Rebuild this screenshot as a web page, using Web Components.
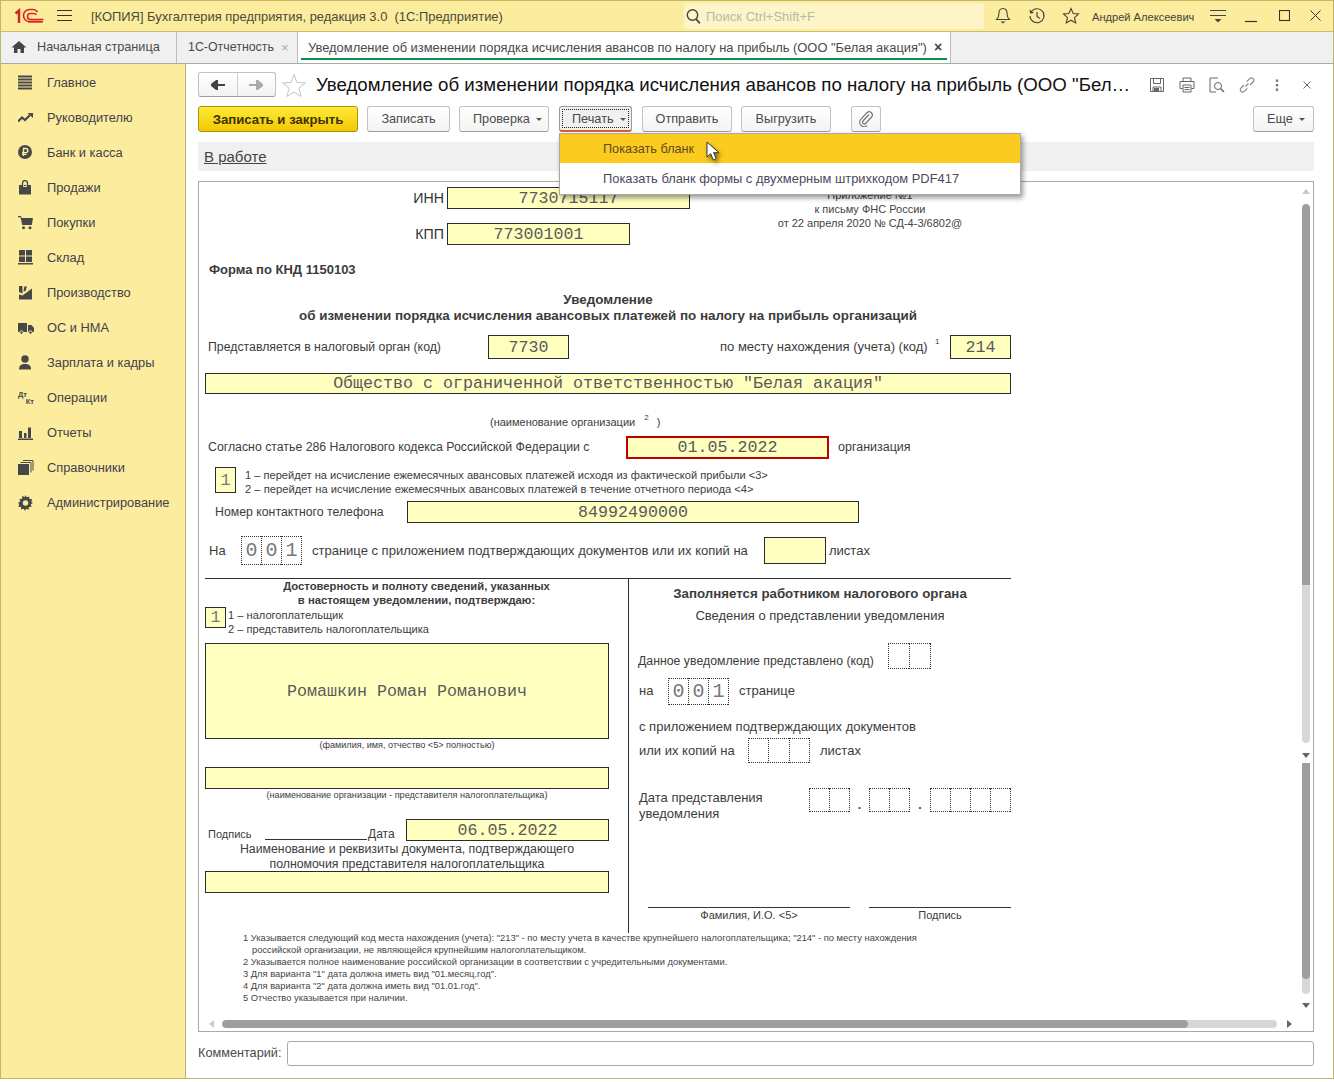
<!DOCTYPE html>
<html lang="ru"><head><meta charset="utf-8"><title>1С</title>
<style>
html,body{margin:0;padding:0;background:#fff}
body{width:1334px;height:1082px;overflow:hidden;font-family:"Liberation Sans",Arial,sans-serif}
</style></head><body>
<app-window></app-window>
<script>
function def(name, css, html){
  customElements.define(name, class extends HTMLElement{
    connectedCallback(){
      if(this.shadowRoot) return;
      const r=this.attachShadow({mode:'open'});
      const h=typeof html==='function'?html(this):html;
      r.innerHTML='<style>'+css+'</style>'+h;
    }
  });
}
const S=(w,h,inner,extra='')=>`<svg width="${w}" height="${h}" viewBox="0 0 ${w} ${h}" style="display:block;${extra}" aria-hidden="true">${inner}</svg>`;

/* ---------- small generic parts ---------- */
def('f-box',`:host{display:flex;align-items:center;justify-content:center;box-sizing:border-box;flex:none;border:1px solid #2b2b2b;background:#ffffc0;color:#5a5a5a;font:16.67px/1 "Liberation Mono",monospace;white-space:pre;padding-top:2px}`,`<slot></slot>`);
def('f-cells',`:host{display:flex;flex:none;box-sizing:border-box;border-right:1px dotted #333}
 i{flex:1;box-sizing:border-box;border:1px dotted #333;border-right:0;display:flex;align-items:center;justify-content:center;font:normal 20px/1 "Liberation Mono",monospace;color:#777}`,
 el=>{const n=+el.getAttribute('n');const v=el.getAttribute('v')||'';let s='';for(let i=0;i<n;i++)s+=`<i>${v[i]||''}</i>`;return s;});

def('tool-btn',`:host{display:flex;align-items:center;justify-content:center;box-sizing:border-box;height:26px;flex:none;border:1px solid #c2c2c2;border-bottom-color:#9d9d9d;border-radius:3px;background:linear-gradient(#fff,#f3f3f3);font:12.7px "Liberation Sans",sans-serif;color:#4a4a4a;white-space:nowrap}
 :host([primary]){background:linear-gradient(#fdec3a,#f4c800);border-color:#a8930f;color:#3d3300;font-weight:bold;font-size:13.2px}
 :host([caret]){justify-content:flex-start;padding-left:13px}
 :host([pressed]){background:#f0f0f0;border-color:#9a9a9a;border-bottom:2px solid #d2622a;padding:2px}
 .in{display:flex;align-items:center;justify-content:center;width:100%;height:100%;box-sizing:border-box}
 :host([caret]) .in{justify-content:flex-start}
 :host([pressed]) .in{border:1px dotted #222;padding-left:9px}
 .c{display:inline-block;width:0;height:0;border:3px solid transparent;border-top:3px solid #555;border-bottom:0;margin-left:6px;margin-top:1px}`,
 el=>`<span class="in"><slot></slot>${el.hasAttribute('caret')?'<span class="c"></span>':''}</span>`);

/* ---------- top bar ---------- */
def('top-bar',`:host{display:flex;align-items:center;box-sizing:border-box;height:31px;background:#fbec9e;border-bottom:1px solid #c9bd70;flex:none;color:#4c4a3c;font:12.93px "Liberation Sans",sans-serif}
 .logo{margin-left:13px}.ham{margin-left:13px}
 .t{margin-left:19px;width:593px;white-space:pre;padding-top:1px}
 .s{width:300px;height:26px;background:#fdf5c8;border-radius:3px;display:flex;align-items:center;box-sizing:border-box;padding-left:2px;color:#bcb89e;font-size:13px}
 .s span{margin-left:5px;padding-top:1px}
 .u{font-size:11.1px;margin-left:12px;width:104px;white-space:nowrap;color:#45433a;padding-top:1px}
 .ic{flex:none}`,
 `<span class="logo">${S(30,16,`<g fill="none" stroke="#d8222a"><path d="M1.5 5.5 5 2.5V15" stroke-width="2.4"/><path d="M28 14.5H16.5a6 6 0 0 1 0-12H20a6 6 0 0 1 4.6 2.4" stroke-width="1.6" transform="translate(-1 -1)"/><path d="M29.5 11.5H16.5a3 3 0 0 1 0-6H20a3 3 0 0 1 2.4 1.2" stroke-width="1.6"/></g><rect x="14" y="13" width="15" height="1.6" fill="#d8222a"/>`)}</span>
 <span class="ham">${S(15,12,`<path d="M0 .5h15M0 5.5h15M0 10.5h15" stroke="#333"/>`)}</span>
 <span class="t">[КОПИЯ] Бухгалтерия предприятия, редакция 3.0  (1С:Предприятие)</span>
 <div class="s">${S(15,17,`<circle cx="6.5" cy="7" r="5.2" fill="none" stroke="#444" stroke-width="1.4"/><path d="M10.2 11l3.6 4.4" stroke="#444" stroke-width="1.8"/>`)}<span>Поиск Ctrl+Shift+F</span></div>
 <span class="ic" style="margin-left:11px">${S(16,18,`<path d="M8 1.500c-2.800 0-4 2-4 4.500 0 3-.8 5-2.400 6.500h12.800C12.800 11 12 9 12 6c0-2.500-1.200-4.500-4-4.500z" fill="none" stroke="#444" stroke-width="1.100"/><path d="M5.500 14.500h5L8 16.500z" fill="#444"/>`)}</span>
 <span class="ic" style="margin-left:17px">${S(18,18,`<path d="M3.200 4.800A7 7 0 1 1 2 9" fill="none" stroke="#444" stroke-width="1.100"/><path d="M1.500 2.500l.6 4 4-.6z" fill="#444"/><path d="M9 5v4.500l3 2" fill="none" stroke="#444" stroke-width="1.200"/>`)}</span>
 <span class="ic" style="margin-left:16px">${S(18,18,`<path d="M9 1.500l2.200 5 5.300.5-4 3.600 1.200 5.400L9 13.200 4.300 16l1.200-5.400-4-3.600 5.300-.5z" fill="none" stroke="#444" stroke-width="1.100"/>`)}</span>
 <span class="u">Андрей Алексеевич</span>
 <span class="ic" style="margin-left:14px">${S(16,14,`<path d="M0 1.500h16M0 6.500h16" stroke="#444"/><path d="M4.500 10h7L8 13.500z" fill="#444"/>`)}</span>
 <span class="ic" style="margin-left:19px">${S(12,14,`<path d="M0 12.500h12" stroke="#333" stroke-width="1.200"/>`)}</span>
 <span class="ic" style="margin-left:22px">${S(11,12,`<rect x=".5" y=".5" width="10" height="10" fill="none" stroke="#333" stroke-width="1.100"/>`)}</span>
 <span class="ic" style="margin-left:20px">${S(11,12,`<path d="M.5 .5l10 10M10.500 .5l-10 10" stroke="#333"/>`)}</span>`);

/* ---------- tabs ---------- */
def('tab-bar',`:host{display:flex;box-sizing:border-box;height:32px;background:#f0f0f0;border-bottom:1px solid #a9a9a9;flex:none;font:12.7px "Liberation Sans",sans-serif;color:#4a4a4a}
 .tab{display:flex;align-items:center;box-sizing:border-box;border-right:1px solid #bdbdbd;flex:none;white-space:nowrap;padding-bottom:1px}
 .a{background:#fff;position:relative;border-right:1px solid #bdbdbd;font-size:12.92px}
 .a::after{content:"";position:absolute;left:3px;right:3px;bottom:3px;height:2px;background:#0c8f4d}`,
 `<div class="tab" style="width:176px;padding-left:10px">${S(16,14,`<path d="M8 1L.5 7.500H3V13h3.500V9h3v4H13V7.500h2.500z" fill="#444"/>`)}<span style="margin-left:10px">Начальная страница</span></div>
 <div class="tab" style="width:121px;padding-left:11px;font-size:12.4px">1С-Отчетность<span style="margin-left:7px;color:#aaa;font-size:13px">×</span></div>
 <div class="tab a" style="width:653px;padding-left:10px">Уведомление об изменении порядка исчисления авансов по налогу на прибыль (ООО "Белая акация")<span style="margin-left:7px;color:#444;font-size:14px;font-weight:bold">×</span></div>`);

/* ---------- side nav ---------- */
const NI={
 main:`<path d="M0 1.500h14M0 4.500h14M0 7.500h14M0 10.500h14M0 13.500h14" stroke="#484848" stroke-width="1.800"/>`,
 boss:`<path d="M0 11.500l4-4 3 2.500 5-5" fill="none" stroke="#484848" stroke-width="2.200"/><path d="M9.500 3H15v5z" fill="#484848"/>`,
 bank:`<circle cx="7" cy="7" r="7" fill="#484848"/><path d="M5.500 11V3.500h2.300a2 2 0 0 1 0 4.200H4M4 9.300h4.500" fill="none" stroke="#fbec9e" stroke-width="1.300"/>`,
 sale:`<path d="M1 5h12v9.500H1z" fill="#484848"/><path d="M4.500 7V3a2.500 2.500 0 0 1 5 0v4" fill="none" stroke="#484848" stroke-width="1.300"/><path d="M5.200 5h3.600V7H5.200z" fill="#fbec9e"/><path d="M6 5h2v1H6z" fill="#484848"/>`,
 buy:`<path d="M0 1h2.800l1 2H15l-1.200 7H4.200L2.500 2.300H0z" fill="#484848"/><circle cx="5.500" cy="12.800" r="1.500" fill="#484848"/><circle cx="12" cy="12.800" r="1.500" fill="#484848"/>`,
 stock:`<path d="M1 0h6v5.500H1zM8 0h6v5.500H8zM1 6.500h6V12H1zM8 6.500h6V12H8zM0 13h15v1.500H0z" fill="#484848"/>`,
 prod:`<path d="M1 7V1h3.500v7.500zM5.500 6.500l.8-5H9L7.500 6zM1 14.500V9.500l3.500 1L14 3.500v11z" fill="#484848"/>`,
 car:`<path d="M0 3h9v9H0zM10 5h3.500L16 8v4H10z" fill="#484848"/><circle cx="3.500" cy="12.500" r="1.700" fill="#484848" stroke="#fbec9e"/><circle cx="12.500" cy="12.500" r="1.700" fill="#484848" stroke="#fbec9e"/>`,
 man:`<circle cx="7" cy="4" r="3.700" fill="#484848"/><path d="M1 14.500c0-4 2-5.500 6-5.500s6 1.500 6 5.500z" fill="#484848"/>`,
 rep:`<path d="M1 6h3v7H1zM6 8h2.500v5H6zM10 2.500h3V13h-3zM0 13.500h15V15H0z" fill="#484848"/>`,
 ref:`<path d="M0 4h11v11H0z" fill="#484848"/><path d="M2.500 2.500h10.500v10M5 .5h10v10" fill="none" stroke="#484848"/>`,
 gear:`<g fill="#484848"><path d="M7.500 0l1.200 2.300 2.600-.9.200 2.700 2.700.2-.9 2.600L15 8l-2.300 1.200.9 2.600-2.700.2-.2 2.700-2.600-.9L7 16l-1.200-2.300-2.600.9-.2-2.700-2.700-.2.9-2.600L0 7.800l2.300-1.200-.9-2.600 2.700-.2.2-2.700 2.600.9z"/></g><circle cx="7.500" cy="8" r="2.700" fill="#fbec9e"/>`
};
def('nav-item',`:host{display:flex;align-items:center;height:35px;flex:none;font:12.85px "Liberation Sans",sans-serif;color:#43414a}
 .i{width:16px;height:16px;margin-left:17px;flex:none;display:flex;align-items:center;justify-content:center}
 .t{margin-left:13px;white-space:nowrap}
 .dk{font:bold 7.500px/7px "Liberation Sans",sans-serif;color:#484848;display:block;width:16px}
 .dk b{display:block}.dk b+b{text-align:right}`,
 el=>{const k=el.getAttribute('i');const ic=k==='op'?`<span class="dk"><b>Дт</b><b>Кт</b></span>`:S(16,16,NI[k]);return `<span class="i">${ic}</span><span class="t"><slot></slot></span>`;});
def('side-nav',`:host{display:flex;flex-direction:column;box-sizing:border-box;width:185px;background:#fbec9e;border-right:1px solid #bdb36a;flex:none;padding-top:1px}`,`<slot></slot>`);

/* ---------- document head ---------- */
def('doc-head',`:host{display:flex;align-items:center;height:25px;flex:none;font:18.67px "Liberation Sans",sans-serif;color:#111}
 .nav{display:flex;width:78px;height:25px;box-sizing:border-box;border:1px solid #c2c2c2;border-bottom-color:#9d9d9d;border-radius:3px;background:linear-gradient(#fff,#f3f3f3);flex:none}
 .nav span{flex:1;display:flex;align-items:center;justify-content:center}
 .nav span+span{border-left:1px solid #cfcfcf}
 .title{margin-left:10px;width:820px;white-space:nowrap;overflow:hidden;text-overflow:ellipsis;flex:none;padding-top:1px}
 .ic{flex:none;display:block}`,
 `<div class="nav"><span>${S(14,10,`<path d="M14 5H5M6 .5L.5 5 6 9.500z" stroke="#444" stroke-width="2" fill="#444"/>`)}</span><span>${S(14,10,`<path d="M0 5h9M8 .5L13.500 5 8 9.500z" stroke="#aaa" stroke-width="2" fill="#aaa"/>`)}</span></div>
 <span style="margin-left:6px;flex:none">${S(24,24,`<path d="M12 1.500l3 8 8.500.4-6.700 5.300 2.300 8.200L12 19l-7.100 4.400 2.300-8.200L.5 9.900 9 9.500z" fill="none" stroke="#c4c4c4" stroke-width="1"/>`)}</span>
 <span class="title">Уведомление об изменении порядка исчисления авансов по налогу на прибыль (ООО "Белая акация")</span>
 <span class="ic" style="margin-left:13px">${S(16,16,`<path d="M1.500 1.500h13v13h-13z" fill="none" stroke="#666"/><path d="M4.500 1.500h7v5h-7zM4 10h8v4.500H4z" fill="none" stroke="#666"/><path d="M5 11h5v3.500H5z" fill="#666"/>`)}</span>
 <span class="ic" style="margin-left:14px">${S(16,16,`<path d="M4 4.500V1h8v3.500M3.500 11.500H1v-7h14v7h-2.500" fill="none" stroke="#666"/><path d="M4 8h8v7H4z" fill="none" stroke="#666"/><path d="M5.500 10.500h5M5.500 12.500h5" stroke="#666"/>`)}</span>
 <span class="ic" style="margin-left:14px">${S(16,16,`<path d="M9 1H1v14h6" fill="none" stroke="#666"/><circle cx="9" cy="9" r="3.500" fill="none" stroke="#666"/><path d="M11.500 11.500l3.500 3.500" stroke="#666" stroke-width="1.500"/>`)}</span>
 <span class="ic" style="margin-left:14px">${S(16,16,`<path d="M6.500 9.500l3-3M5 8L2 11a2.300 2.300 0 0 0 3.300 3.300l3-3M11 8l3-3A2.300 2.300 0 0 0 10.700 1.700l-3 3" fill="none" stroke="#888" stroke-width="1.200"/>`)}</span>
 <span class="ic" style="margin-left:14px">${S(16,16,`<g fill="#777"><rect x="6.800" y="2.500" width="2.400" height="2.400"/><rect x="6.800" y="7" width="2.400" height="2.400"/><rect x="6.800" y="11.500" width="2.400" height="2.400"/></g>`)}</span>
 <span class="ic" style="margin-left:14px">${S(16,16,`<path d="M4.500 4.500l7 7M11.500 4.500l-7 7" stroke="#666"/>`)}</span>`);

def('doc-toolbar',`:host{display:flex;height:26px;margin-top:9px;flex:none}`,`<slot></slot>`);

/* ---------- form ---------- */
def('tax-form',`:host{display:block;font:12.3px "Liberation Sans",sans-serif;color:#3c3c3c;width:1100px;line-height:16px}
 .r{display:flex;align-items:center;flex:none}
 .head{display:grid;grid-template-columns:491px 200px;column-gap:80px;margin-top:5px}
 .big{font-size:14.2px;text-align:right;width:245px;margin-right:3px;color:#333}
 .app{font-size:11px;line-height:14px;text-align:center;padding-top:1px;color:#444}
 .c{text-align:center}
 .b{font-weight:bold}
 .t13{font-size:13px}
 .pb{padding-bottom:1px}
 .fn{font-size:9.35px;line-height:12px;margin-left:44px;color:#444;white-space:nowrap;margin-top:-1px}
 .fn div.i{padding-left:9px}
 .cap{font-size:9.1px;line-height:12px;text-align:center;width:404px}
 .two{display:flex;margin-left:6px;width:806px;height:354px;border-top:1px solid #2e2e2e;margin-top:13px}
 .L{width:424px;box-sizing:border-box;border-right:1px solid #2e2e2e;flex:none}
 .Rr{flex:1}
 .sm{font-size:11.1px;line-height:14px}
 f-box.one{color:#777}
 `,
 `<div class="head">
    <div>
      <div class="r" style="height:22px"><span class="big">ИНН</span><f-box style="width:243px;height:22px">7730715117</f-box></div>
      <div class="r" style="height:22px;margin-top:14px"><span class="big">КПП</span><f-box style="width:183px;height:22px">773001001</f-box></div>
    </div>
    <div class="app"><div>Приложение №1</div><div>к письму ФНС России</div><div>от 22 апреля 2020 № СД-4-3/6802@</div></div>
  </div>
  <div class="b t13" style="margin:17px 0 0 10px">Форма по КНД 1150103</div>
  <div class="b c" style="margin-top:14px;width:818px;font-size:13.4px;white-space:nowrap"><div>Уведомление</div><div>об изменении порядка исчисления авансовых платежей по налогу на прибыль организаций</div></div>
  <div class="r" style="height:24px;margin-top:11px">
    <span style="margin-left:9px;width:280px">Представляется в налоговый орган (код)</span>
    <f-box style="width:81px;height:24px">7730</f-box>
    <span class="t13" style="margin-left:151px;width:215px;white-space:nowrap">по месту нахождения (учета) (код)</span>
    <span style="font-size:8px;width:15px;margin-top:-10px">1</span>
    <f-box style="width:61px;height:24px">214</f-box>
  </div>
  <f-box style="margin:14px 0 0 6px;width:806px;height:21px">Общество с ограниченной ответственностью "Белая акация"</f-box>
  <div class="sm" style="margin:21px 0 0 291px;height:14px;white-space:nowrap;font-size:11px">(наименование организации<span style="font-size:8px;vertical-align:6px;line-height:0;margin:0 8px 0 9px">2</span>)</div>
  <div class="r" style="height:23px;margin-top:7px">
    <span class="pb" style="margin-left:9px;width:418px;white-space:nowrap">Согласно статье 286 Налогового кодекса Российской Федерации с</span>
    <f-box style="width:203px;height:23px;border:2px solid #c00000">01.05.2022</f-box>
    <span class="pb" style="margin-left:9px;font-size:12.5px">организация</span>
  </div>
  <div class="r" style="height:26px;margin-top:8px;align-items:flex-start">
    <f-box class="one" style="margin-left:16px;width:21px;height:26px">1</f-box>
    <div class="sm" style="margin:1px 0 0 9px;white-space:nowrap"><div>1 – перейдет на исчисление ежемесячных авансовых платежей исходя из фактической прибыли &lt;3&gt;</div><div style="font-size:11.2px">2 – перейдет на исчисление ежемесячных авансовых платежей в течение отчетного периода &lt;4&gt;</div></div>
  </div>
  <div class="r" style="height:22px;margin-top:8px">
    <span style="margin-left:16px;width:192px">Номер контактного телефона</span>
    <f-box style="width:452px;height:22px">84992490000</f-box>
  </div>
  <div class="r" style="height:29px;margin-top:13px">
    <span class="t13" style="margin-left:10px;width:32px">На</span>
    <f-cells n="3" v="001" style="width:61px;height:29px"></f-cells>
    <span class="t13" style="margin-left:10px;width:452px;white-space:nowrap">странице с приложением подтверждающих документов или их копий на</span>
    <f-box style="width:62px;height:27px"></f-box>
    <span class="t13" style="margin-left:3px">листах</span>
  </div>
  <div class="two">
    <div class="L">
      <div class="b c" style="font-size:11.25px;line-height:14px;width:423px"><div>Достоверность и полноту сведений, указанных</div><div>в настоящем уведомлении, подтверждаю:</div></div>
      <div class="r" style="height:36px;align-items:flex-start">
        <f-box class="one" style="width:21px;height:21px">1</f-box>
        <div class="sm" style="margin:1px 0 0 2px;white-space:nowrap"><div>1 – налогоплательщик</div><div>2 – представитель налогоплательщика</div></div>
      </div>
      <f-box style="width:404px;height:96px">Ромашкин Роман Романович</f-box>
      <div class="cap">(фамилия, имя, отчество &lt;5&gt; полностью)</div>
      <f-box style="width:404px;height:22px;margin-top:16px"></f-box>
      <div class="cap">(наименование организации - представителя налогоплательщика)</div>
      <div class="r" style="height:22px;margin-top:18px;align-items:flex-end">
        <span style="font-size:11px;margin-left:3px;width:57px;line-height:14px">Подпись</span>
        <span style="width:102px;height:1px;background:#333;margin-bottom:1px;margin-right:1px"></span>
        <span style="width:38px;line-height:14px;font-size:12px">Дата</span>
        <f-box style="width:203px;height:22px">06.05.2022</f-box>
      </div>
      <div class="c" style="width:404px;line-height:14.5px;box-sizing:border-box;height:30px;padding-top:1px;white-space:nowrap">Наименование и реквизиты документа, подтверждающего<br>полномочия представителя налогоплательщика</div>
      <f-box style="width:404px;height:22px"></f-box>
    </div>
    <div class="Rr">
      <div class="b c" style="margin-top:7px;font-size:13.3px;white-space:nowrap">Заполняется работником налогового органа</div>
      <div class="c t13" style="margin-top:6px">Сведения о представлении уведомления</div>
      <div class="r" style="height:26px;margin-top:19px;align-items:flex-end">
        <span style="margin-left:9px;width:250px;white-space:nowrap">Данное уведомление представлено (код)</span>
        <f-cells n="2" style="width:43px;height:26px"></f-cells>
      </div>
      <div class="r" style="height:27px;margin-top:9px">
        <span class="t13 pb" style="margin-left:10px;width:29px">на</span>
        <f-cells n="3" v="001" style="width:61px;height:27px"></f-cells>
        <span class="t13 pb" style="margin-left:10px">странице</span>
      </div>
      <div class="t13" style="margin:14px 0 0 10px;white-space:nowrap">с приложением подтверждающих документов</div>
      <div class="r" style="height:25px;margin-top:3px">
        <span class="t13" style="margin-left:10px;width:109px;white-space:nowrap">или их копий на</span>
        <f-cells n="3" style="width:62px;height:25px"></f-cells>
        <span class="t13" style="margin-left:10px">листах</span>
      </div>
      <div class="r" style="height:26px;margin-top:25px;align-items:flex-start">
        <div class="t13" style="margin-left:10px;width:170px;line-height:15.500px;padding-top:2px">Дата представления<br>уведомления</div>
        <f-cells n="2" style="width:41px;height:24px"></f-cells>
        <span style="width:19px;text-align:center;line-height:34px;font-weight:bold">.</span>
        <f-cells n="2" style="width:41px;height:24px"></f-cells>
        <span style="width:20px;text-align:center;line-height:34px;font-weight:bold">.</span>
        <f-cells n="4" style="width:81px;height:24px"></f-cells>
      </div>
      <div class="r" style="margin-top:93px;align-items:flex-start;font-size:11px;line-height:14px">
        <div class="c" style="margin-left:19px;width:202px;border-top:1px solid #333">Фамилия, И.О. &lt;5&gt;</div>
        <div class="c" style="margin-left:19px;width:142px;border-top:1px solid #333">Подпись</div>
      </div>
    </div>
  </div>
  <div class="fn">
    <div>1 Указывается следующий код места нахождения (учета): "213" - по месту учета в качестве крупнейшего налогоплательщика; "214" - по месту нахождения</div>
    <div class="i">российской организации, не являющейся крупнейшим налогоплательщиком.</div>
    <div>2 Указывается полное наименование российской организации в соответствии с учредительными документами.</div>
    <div>3 Для варианта "1" дата должна иметь вид "01.месяц.год".</div>
    <div>4 Для варианта "2" дата должна иметь вид "01.01.год".</div>
    <div>5 Отчество указывается при наличии.</div>
  </div>`);

def('form-panel',`:host{display:grid;grid-template-columns:1fr 12px;grid-template-rows:1fr 16px;box-sizing:border-box;height:851px;margin-top:10px;border:1px solid #a9a9a9;flex:none;background:#fff}
 .content{overflow:hidden;grid-column:1;grid-row:1;min-width:0;min-height:0}
 .v{grid-column:2;grid-row:1 / 3;display:flex;flex-direction:column;align-items:center;width:8px;margin-left:1px;padding-top:7px;height:827px}
 .tr{background:#d7d7d7;width:8px}
 .th{background:#9e9e9e;width:8px}
 .h{grid-column:1;grid-row:2;display:flex;align-items:center;height:8px;margin-top:5px;padding-left:10px}
 .up,.dn{width:0;height:0;border:4px solid transparent;flex:none}
 .up{border-bottom:5px solid #c8c8c8;border-top:0}
 .dn{border-top:5px solid #666;border-bottom:0}
 .hl{border:4px solid transparent;border-right:5px solid #ccc;border-left:0;flex:none}
 .hr{border:4px solid transparent;border-left:5px solid #666;border-right:0;flex:none;margin-left:10px}
 .ht{width:1055px;height:8px;margin-left:8px;background:#d7d7d7;border-radius:4px;flex:none;overflow:hidden}
 .ht i{display:block;width:966px;height:8px;background:#9e9e9e;border-radius:4px}`,
 `<div class="content"><slot></slot></div>
  <div class="v">
    <span class="up"></span>
    <div class="tr" style="height:539px;margin-top:10px;border-radius:4px;overflow:hidden"><div class="th" style="height:381px;border-radius:4px 4px 0 0"></div></div>
    <span class="dn" style="margin-top:10px"></span>
    <div class="tr" style="height:231px;margin-top:5px;overflow:hidden;border-radius:0 0 4px 4px"><div class="th" style="height:216px;border-radius:0 0 4px 4px"></div></div>
    <span class="dn" style="margin-top:9px"></span>
  </div>
  <div class="h"><span class="hl"></span><div class="ht"><i></i></div><span class="hr"></span></div>`);

def('pop-menu',`:host{position:absolute;left:373px;top:69px;width:462px;box-sizing:border-box;background:#fff;border:1px solid #a8a8a8;box-shadow:2px 3px 5px rgba(0,0,0,.4);z-index:5;padding:0 0 1px;font:12.9px "Liberation Sans",sans-serif;color:#4b4a5e}
 div{height:30px;display:flex;align-items:center;padding:1px 0 0 43px;box-sizing:border-box;white-space:nowrap}
 .on{background:#fbcc1f;color:#5b4a20;height:29px;padding-top:0;font-size:12.7px}
 svg{position:absolute;left:146px;top:7px;filter:drop-shadow(2px 3px 2px rgba(60,50,0,.6))}`,
 `<div class="on">Показать бланк</div><div>Показать бланк формы с двухмерным штрихкодом PDF417</div>
 <svg width="16" height="21" viewBox="0 0 16 21"><path d="M1 1v15l3.700-3.300 2.600 6.300 3-1.300-2.700-6H13z" fill="#fff" stroke="#333"/></svg>`);

def('comment-row',`:host{display:flex;align-items:center;height:26px;margin-top:8px;flex:none;font:12.7px "Liberation Sans",sans-serif;color:#4a4a4a}
 .i{margin-left:6px;flex:1;height:25px;box-sizing:border-box;border:1px solid #a9a9a9;border-radius:3px;background:#fff}`,
 `<span>Комментарий:</span><div class="i"></div>`);

def('status-bar',`:host{display:flex;align-items:center;height:29px;margin-top:10px;background:#f0f0f0;padding-left:6px;flex:none;font:15px "Liberation Sans",sans-serif;color:#444}
 span{text-decoration:underline}`,`<span>В работе</span>`);

/* ---------- the window ---------- */
def('doc-view',`:host{display:flex;flex-direction:column;position:relative;flex:1;box-sizing:border-box;padding:8px 19px 0 12px;min-width:0;background:#fff}`,`<slot></slot>`);

def('app-window',`:host{display:flex;flex-direction:column;box-sizing:border-box;width:1334px;height:1079px;border:1px solid #c4b865;overflow:hidden;background:#fff}
 .body{display:flex;flex:1;min-height:0}`,
 `<top-bar></top-bar><tab-bar></tab-bar>
 <div class="body">
  <side-nav>
   <nav-item i="main">Главное</nav-item><nav-item i="boss">Руководителю</nav-item><nav-item i="bank">Банк и касса</nav-item><nav-item i="sale">Продажи</nav-item><nav-item i="buy">Покупки</nav-item><nav-item i="stock">Склад</nav-item><nav-item i="prod">Производство</nav-item><nav-item i="car">ОС и НМА</nav-item><nav-item i="man">Зарплата и кадры</nav-item><nav-item i="op">Операции</nav-item><nav-item i="rep">Отчеты</nav-item><nav-item i="ref">Справочники</nav-item><nav-item i="gear">Администрирование</nav-item>
  </side-nav>
  <doc-view>
   <doc-head></doc-head>
   <doc-toolbar>
    <tool-btn primary style="width:160px">Записать и закрыть</tool-btn>
    <tool-btn style="width:83px;margin-left:9px">Записать</tool-btn>
    <tool-btn caret style="width:90px;margin-left:9px">Проверка</tool-btn>
    <tool-btn caret pressed style="width:73px;margin-left:10px">Печать</tool-btn>
    <tool-btn style="width:90px;margin-left:10px">Отправить</tool-btn>
    <tool-btn style="width:90px;margin-left:9px">Выгрузить</tool-btn>
    <tool-btn style="width:30px;margin-left:20px"><svg width="16" height="16" viewBox="0 0 16 16" style="display:block"><path d="M11 3.500L5 10a1.800 1.800 0 0 0 2.600 2.500l6-6.500a3.200 3.200 0 0 0-4.500-4.500L2.800 8.300a4.500 4.500 0 0 0 6.400 6.300" fill="none" stroke="#777" stroke-width="1.200"/></svg></tool-btn>
    <tool-btn caret style="width:61px;margin-left:372px">Еще</tool-btn>
   </doc-toolbar>
   <status-bar></status-bar>
   <form-panel><tax-form></tax-form></form-panel>
   <comment-row></comment-row>
   <pop-menu></pop-menu>
  </doc-view>
 </div>`);
</script>
</body></html>
